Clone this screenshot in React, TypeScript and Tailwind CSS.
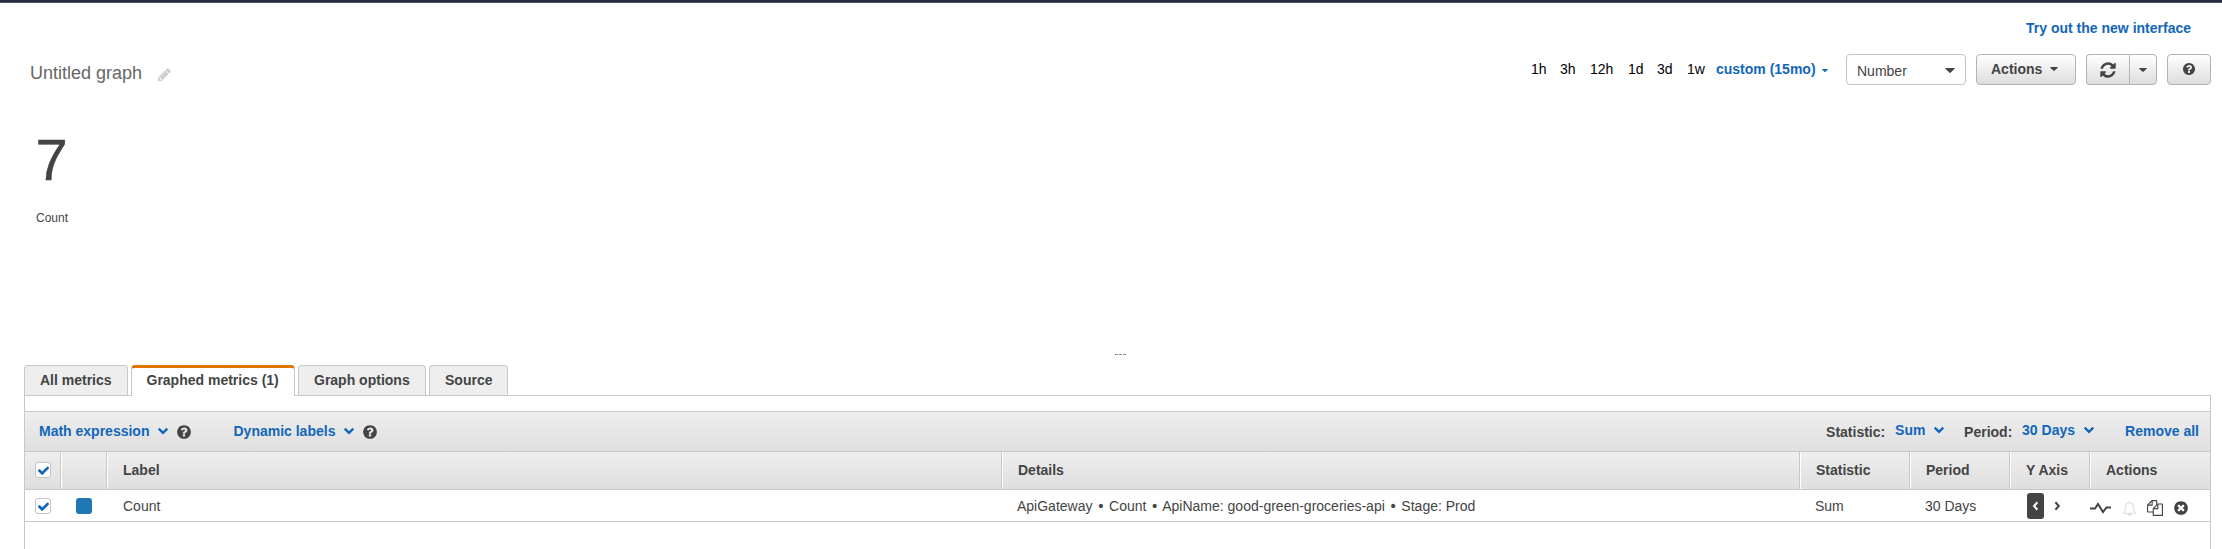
import React from "react";

const P = {
  help: "M1024 1376v-192q0-14-9-23t-23-9h-192q-14 0-23 9t-9 23v192q0 14 9 23t23 9h192q14 0 23-9t9-23zm256-672q0-88-55.5-163t-138.5-116-170-41q-243 0-371 213-15 24 8 42l132 100q7 6 19 6 16 0 25-12 53-68 86-92 34-24 86-24 48 0 85.5 26t37.5 59q0 38-20 61t-68 45q-63 28-115.5 86.5t-52.5 125.5v36q0 14 9 23t23 9h192q14 0 23-9t9-23q0-19 21.5-49.5t54.5-49.5q32-18 49-28.5t46-35 44.5-48 28-60.5 12.5-81zm384 192q0 209-103 385.5t-279.5 279.5-385.5 103-385.5-103-279.5-279.5-103-385.5 103-385.5 279.5-279.5 385.5-103 385.5 103 279.5 279.5 103 385.5z",
  refresh: "M1639 1056q0 5-1 7-64 268-268 434.5t-478 166.5q-146 0-282.5-55t-243.5-157l-129 129q-19 19-45 19t-45-19-19-45v-448q0-26 19-45t45-19h448q26 0 45 19t19 45-19 45l-137 137q71 66 161 102t187 36q134 0 250-65t186-179q11-17 53-117 8-23 30-23h192q13 0 22.5 9.5t9.5 22.5zm25-800v448q0 26-19 45t-45 19h-448q-26 0-45-19t-19-45 19-45l138-138q-148-137-349-137-134 0-250 65t-186 179q-11 17-53 117-8 23-30 23h-199q-13 0-22.5-9.5t-9.5-22.5v-7q65-268 270-434.5t480-166.5q146 0 284 55.5t245 156.5l130-129q19-19 45-19t45 19 19 45z",
  pencil: "M491 1536l91-91-235-235-91 91v107h128v128h107zm523-928q0-22-22-22-10 0-17 7l-542 542q-7 7-7 17 0 22 22 22 10 0 17-7l542-542q7-7 7-17zm-54-192l416 416-832 832h-416v-416zm683 96q0 53-37 90l-166 166-416-416 166-165q36-38 90-38 53 0 91 38l235 234q37 39 37 91z",
  remove: "M1277 1122q0-26-19-45l-181-181 181-181q19-19 19-45 0-27-19-46l-90-90q-19-19-46-19-26 0-45 19l-181 181-181-181q-19-19-45-19-27 0-46 19l-90 90q-19 19-19 46 0 26 19 45l181 181-181 181q-19 19-19 45 0 27 19 46l90 90q19 19 46 19 26 0 45-19l181-181 181 181q19 19 45 19 27 0 46-19l90-90q19-19 19-46zm387-226q0 209-103 385.5t-279.5 279.5-385.5 103-385.5-103-279.5-279.5-103-385.5 103-385.5 279.5-279.5 385.5-103 385.5 103 279.5 279.5 103 385.5z",
  copy: "M1696 384q40 0 68 28t28 68v1216q0 40-28 68t-68 28h-960q-40 0-68-28t-28-68v-288h-544q-40 0-68-28t-28-68v-672q0-40 20-88t48-76l408-408q28-28 76-48t88-20h416q40 0 68 28t28 68v328q68-40 128-40h416zm-544 213l-299 299h299v-299zm-640-384l-299 299h299v-299zm196 647l316-316v-416h-384v416q0 40-28 68t-68 28h-416v640h512v-256q0-40 20-88t48-76zm956 804v-1152h-384v416q0 40-28 68t-68 28h-416v640h896z",
  check: "M1671 566q0 40-28 68l-724 724-136 136q-28 28-68 28t-68-28l-136-136-362-362q-28-28-28-68t28-68l136-136q28-28 68-28t68 28l294 295 656-657q28-28 68-28t68 28l136 136q28 28 28 68z",
  bell: "M912 1696q0-16-16-16-59 0-101.5-42.5t-42.5-101.5q0-16-16-16t-16 16q0 73 51.5 124.5t124.5 51.5q16 0 16-16zm-666-288h1300q-266-300-266-832 0-51-24-105t-69-103-121.5-80.5-169.5-31.5-169.5 31.5-121.5 80.5-69 103-24 105q0 532-266 832zm1482 0q0 52-38 90t-90 38h-448q0 106-75 181t-181 75-181-75-75-181h-448q-52 0-90-38t-38-90q50-42 91-88t85-119.5 74.5-158.5 50-206 19.5-260q0-152 117-282.5t307-158.5q-8-19-8-39 0-40 28-68t68-28 68 28 28 68q0 20-8 39 190 28 307 158.5t117 282.5q0 139 19.5 260t50 206 74.5 158.5 85 119.5 91 88z",
};

function Glyph({ d, className }: { d: string; className: string }) {
  return (
    <svg viewBox="0 0 1792 1792" fill="currentColor" className={`shrink-0 ${className}`}>
      <path d={d} />
    </svg>
  );
}

function Caret({ className }: { className: string }) {
  return (
    <svg viewBox="0 0 10 5" preserveAspectRatio="none" fill="currentColor" className={`shrink-0 ${className}`}>
      <path d="M0.6 0H9.4Q10 0.3 9.6 0.8L5.5 4.8Q5 5.2 4.5 4.8L0.4 0.8Q0 0.3 0.6 0Z" />
    </svg>
  );
}

function Chevron({ className }: { className: string }) {
  return (
    <svg viewBox="0 0 12 8" fill="none" stroke="currentColor" strokeWidth="2.4" className={`h-2 w-3 shrink-0 ${className}`}>
      <path d="M1.7 1.7L6 5.8L10.3 1.7" />
    </svg>
  );
}

function Checkbox() {
  return (
    <span className="mt-px flex size-4 shrink-0 items-center justify-center rounded-[3px] border border-[#c4c4c4] bg-white text-[#1166bb]">
      <Glyph d={P.check} className="size-[13px]" />
    </span>
  );
}

function Bullet() {
  return <span className="inline-block w-[8.8px] text-center font-['DejaVu_Sans',sans-serif] leading-none">•</span>;
}

const button = "flex h-[31px] items-center border border-[#b3b3b3] bg-linear-to-b from-white to-[#dddddd]";
const bar = "bg-linear-to-b from-[#eeeeee] to-[#dfdfdf]";
const cell = "flex h-full items-center border-r border-[#c8c8c8] pb-[2px] shadow-[1px_0_0_#ffffff]";
const tab = "flex h-[30px] items-center rounded-t-[4px] border border-b-0 border-[#c8c8c8] bg-[#eeeeee] pb-[2px] pl-[15px]";

export default function App() {
  return (
    <div className="flex h-[549px] w-[2222px] flex-col overflow-hidden bg-white font-['Liberation_Sans',Arial,sans-serif] text-[14px] leading-[20px] text-[#444444]">
      <header className="h-[3px] shrink-0 border-b border-[#4a5564] bg-[#232f3e]" />

      <div className="flex h-[47px] shrink-0 justify-end pt-[15px] pr-[31px]">
        <a className="h-5 font-bold text-[#1166bb]">Try out the new interface</a>
      </div>

      <div className="flex h-[44px] shrink-0 items-start justify-between pr-[11px] pl-[30px]">
        <div className="flex items-center pt-[13px]">
          <h1 className="text-[18px] leading-[20px] text-[#666666]">Untitled graph</h1>
          <Glyph d={P.pencil} className="mt-[2px] ml-[15px] size-[15px] text-[#cccccc]" />
        </div>
        <div className="flex pt-1">
          <div className="flex h-[31px] items-center pb-[2px] text-black">
            <span className="w-[29px]">1h</span>
            <span className="w-[30px]">3h</span>
            <span className="w-[38px]">12h</span>
            <span className="w-[29px]">1d</span>
            <span className="w-[30px]">3d</span>
            <span className="w-[29px]">1w</span>
            <span className="w-[106px] font-bold text-[#1166bb]">custom (15mo)</span>
            <Caret className="mt-[3px] h-[3px] w-[6px] text-[#1166bb]" />
          </div>
          <div className="ml-[18px] flex h-[31px] w-[120px] items-center rounded-[4px] border border-[#c4c4c4] bg-white pt-[2px] pl-[10px]">
            <span className="w-[88px]">Number</span>
            <Caret className="h-[5px] w-[10px]" />
          </div>
          <div className={`${button} ml-[10px] w-[100px] rounded-[4px] pb-[2px] pl-[14px]`}>
            <span className="w-[59px] font-bold">Actions</span>
            <Caret className="h-[4px] w-[8px]" />
          </div>
          <div className={`${button} ml-[10px] w-[43px] justify-center rounded-l-[4px] border-r-0`}>
            <Glyph d={P.refresh} className="size-[18px]" />
          </div>
          <div className={`${button} w-[28px] justify-center rounded-r-[4px]`}>
            <Caret className="h-[4px] w-[8px]" />
          </div>
          <div className={`${button} ml-[10px] w-[44px] justify-center rounded-[4px] pb-px`}>
            <Glyph d={P.help} className="size-[14px]" />
          </div>
        </div>
      </div>

      <div className="flex h-[261px] shrink-0 flex-col pl-9">
        <span className="mt-[36px] ml-[-0.5px] h-[60px] shrink-0 text-[58px] leading-[60px] [-webkit-text-stroke:0.4px_#444444]">7</span>
        <span className="mt-[18px] h-5 shrink-0 text-[12px] leading-[20px]">Count</span>
        <div className="mt-[126px] ml-[1079px] flex shrink-0 gap-px">
          <span className="h-px w-[3px] bg-[#888888]" />
          <span className="h-px w-[3px] bg-[#888888]" />
          <span className="h-px w-[3px] bg-[#888888]" />
        </div>
      </div>

      <main className="flex flex-1 flex-col pr-[11px] pl-6 pt-[10px]">
        <nav className="z-10 flex h-[30px] shrink-0 gap-[3px] font-bold">
          <div className={`${tab} w-[104px]`}>All metrics</div>
          <div className="flex h-[31px] w-[164px] items-center rounded-t-[4px] border border-t-[3px] border-b-0 border-[#c8c8c8] border-t-[#e07700] bg-white pb-[4px] pl-[14.5px]">
            Graphed metrics (1)
          </div>
          <div className={`${tab} w-[128px]`}>Graph options</div>
          <div className={`${tab} w-[79px]`}>Source</div>
        </nav>
        <section className="flex flex-1 flex-col border border-b-0 border-[#c8c8c8] pt-[15px]">
          <div className={`${bar} flex h-[41px] shrink-0 items-center border-y border-[#c8c8c8] pb-[2px] pl-[14px] font-bold text-[#1166bb]`}>
            <span>Math expression</span>
            <Chevron className="ml-[8px]" />
            <Glyph d={P.help} className="mt-[2px] ml-[7px] size-4 text-[#444444]" />
            <span className="ml-[41px]">Dynamic labels</span>
            <Chevron className="ml-[8px]" />
            <Glyph d={P.help} className="mt-[2px] ml-[7px] size-4 text-[#444444]" />
            <div className="ml-auto flex items-center pr-[11px]">
              <span className="mt-[2px] w-[69px] text-[#444444]">Statistic:</span>
              <span className="mt-[-2px] w-[38px]">Sum</span>
              <Chevron className="mt-[-1px]" />
              <span className="mt-[2px] ml-[19px] w-[58px] text-[#444444]">Period:</span>
              <span className="mt-[-2px] w-[61px]">30 Days</span>
              <Chevron className="mt-[-1px]" />
              <span className="ml-[30px]">Remove all</span>
            </div>
          </div>
          <div className={`${bar} flex h-[38px] shrink-0 items-center border-b border-[#c8c8c8] font-bold`}>
            <div className={`${cell} w-9 pl-[10px]`}><Checkbox /></div>
            <div className={`${cell} w-[46px]`} />
            <div className={`${cell} w-[895px] pl-[16px]`}>Label</div>
            <div className={`${cell} w-[798px] pl-[16px]`}>Details</div>
            <div className={`${cell} w-[110px] pl-[16px]`}>Statistic</div>
            <div className={`${cell} w-[100px] pl-[16px]`}>Period</div>
            <div className={`${cell} w-[80px] pl-[16px]`}>Y Axis</div>
            <div className="pb-[2px] pl-[16px]">Actions</div>
          </div>
          <div className="flex h-[32px] shrink-0 items-center border-b border-[#c8c8c8]">
            <div className="w-9 pl-[10px]"><Checkbox /></div>
            <div className="w-[46px] pl-[15px]"><div className="mt-px size-4 rounded-[3px] bg-[#1f77b4]" /></div>
            <div className="w-[895px] pl-[16px]">Count</div>
            <div className="w-[798px] pl-[15px]">
              ApiGateway <Bullet /> Count <Bullet /> ApiName: good-green-groceries-api <Bullet /> Stage: Prod
            </div>
            <div className="w-[110px] pl-[15px]">Sum</div>
            <div className="w-[100px] pl-[15px]">30 Days</div>
            <div className="flex w-[80px] items-center pl-[17px]">
              <span className="flex h-[26px] w-[17px] items-center justify-center rounded-[3px] bg-[#444444] text-white">
                <svg viewBox="0 0 7 10" className="h-2.5 w-[7px]" fill="none" stroke="currentColor" strokeWidth="2"><path d="M5.4 1.3L2 5L5.4 8.7" /></svg>
              </span>
              <svg viewBox="0 0 7 10" className="ml-[10px] h-2.5 w-[7px]" fill="none" stroke="currentColor" strokeWidth="2"><path d="M1.4 1.3L4.8 5L1.4 8.7" /></svg>
            </div>
            <div className="flex items-center pt-[5px]">
              <svg viewBox="0 0 22 12" className="h-3 w-[22px]" fill="none" stroke="currentColor" strokeWidth="2"><path d="M0 6.5H5L8 2L13 10L16.5 5.5H21" /></svg>
              <Glyph d={P.bell} className="ml-[10px] size-[15px] text-[#dddddd]" />
              <Glyph d={P.copy} className="ml-[10px] size-4" />
              <Glyph d={P.remove} className="ml-[10px] size-4" />
            </div>
          </div>
        </section>
      </main>
    </div>
  );
}
